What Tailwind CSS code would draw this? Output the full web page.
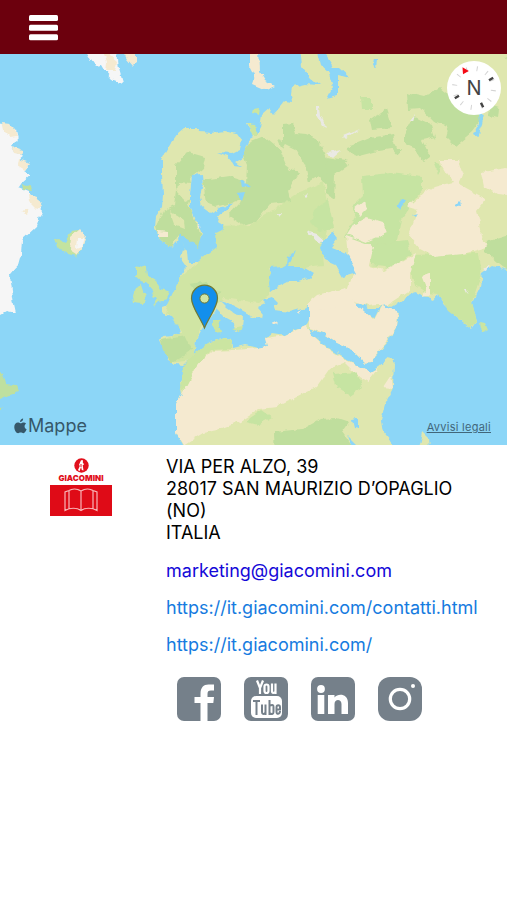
<!DOCTYPE html>
<html lang="it">
<head>
<meta charset="utf-8">
<meta name="viewport" content="width=device-width, initial-scale=1">
<title>Giacomini - Contatti</title>
<script src="https://cdn.jsdelivr.net/npm/@tailwindcss/browser@4"></script>
</head>
<body class="bg-white text-black font-[Inter,'Liberation_Sans',sans-serif]">
<header class="flex h-[54px] items-center bg-[#6c000d] px-7">
  <button type="button" aria-label="Menu" class="block pt-px">
    <svg class="h-7 w-8" viewBox="0 0 32 28" fill="#fff"><rect x="1" y="1" width="29" height="6" rx="1.5"/><rect x="1" y="10.700" width="29" height="6" rx="1.5"/><rect x="1" y="20.300" width="29" height="6" rx="1.500"/></svg>
  </button>
</header>
<main>
  <section aria-label="Mappa" class="relative">
    <svg class="block aspect-[507/391] w-full" viewBox="0 54 507 391" preserveAspectRatio="xMidYMid slice">
      <defs>
        <filter id="coast" x="0" y="0" width="1" height="1" filterUnits="objectBoundingBox">
          <feTurbulence type="fractalNoise" baseFrequency="0.13" numOctaves="2" seed="4"/>
          <feDisplacementMap in="SourceGraphic" scale="6" xChannelSelector="R" yChannelSelector="G"/>
        </filter>
      </defs>
      <rect y="54" width="507" height="391" fill="#8cd6f7"/>
      <g filter="url(#coast)">
        <rect x="-20" y="34" width="547" height="431" fill="#8cd6f7"/>
        <!-- Greenland -->
        <path fill="#f6f6f6" d="M-20 122L3 125 16 130 18 140 10 145 14 152 24 156 18 161 29 165 24 171 30 175 22 182 18 188 28 192 36 200 42 210 36 227 22 240 21 255 18 266 10 275 12 290 14 304 16 313 7 311 0 315-20 315Z"/>
        <path fill="#f5ead0" d="M2 123L10 124 15 129 17 137 10 138 4 132ZM11 146L22 150 23 155 14 153ZM18 159L30 163 25 170 17 165ZM28 194L36 197 42 207 37 209 29 201ZM22 212L30 209 27 215Z"/>
        <path fill="#bfe09f" d="M22 184L29 185 32 191 23 190Z"/>
        <!-- Svalbard -->
        <path fill="#f6f6f6" d="M86 50L117 50 119 69 123 83 112 79 104 70 101 65 96 66 91 59Z"/>
        <path fill="#f5ead0" d="M103 50L117 62 115 71 106 71 107 62ZM122 50L137 50 137 63 133 66 127 59Z"/>
        <!-- Newfoundland -->
        <path fill="#bfe09f" d="M-20 370L2 374 5 384 16 385 19 392 10 395 0 399-20 404ZM-10 407L4 408-2 413Z"/>
        <!-- Iceland -->
        <path fill="#c3e3a0" d="M55 240L59 239 65 242 71 231 78 230 85 236 82 248 76 256 68 254 59 249Z"/>
        <path fill="#f5ead0" d="M71 237L80 229 86 236 82 248 76 255 70 251Z"/>
        <path fill="#f6f6f6" d="M77 238L84 238 81 247 76 249Z"/>
        <!-- Novaya Zemlya -->
        <path fill="#f5ead0" d="M250 48L259 48 260 72 265 80 275 86 266 90 252 84 255 75 250 65Z"/>
        <!-- Eurasia and Africa -->
        <path fill="#dfe7af" d="M527 30L298 30 302 66 311 78 320 85 305 84 292 87 291 95 292 102 285 101 280 107 274 114 270 108 262 115 260 128 257 134 250 123 246 123 253 137 248 140 245 150 243 158 236 162 243 167 234 166 228 156 217 152 232 153 240 149 242 141 237 134 225 131 212 133 200 132 197 128 184 128 178 133 171 143 166 152 162 160 162 175 163 195 162 207 156 215 155 228 160 240 172 248 179 240 186 249 182 251 180 258 185 265 184 272 180 278 178 288 174 297 170 304 162 307 162 313 171 316 178 323 180 333 172 335 162 336 160 340 164 349 168 360 175 364 184 365 192 358 195 350 196 340 202 329 212 316 216 309 223 316 234 322 235 331 242 328 243 318 236 314 226 307 219 300 226 302 236 307 247 313 256 318 263 319 264 314 258 307 266 303 272 303 274 310 289 312 303 308 309 306 310 318 306 326 295 330 285 335 272 333 266 338 268 346 258 348 245 345 233 348 232 339 225 338 210 342 200 350 192 362 184 368 180 382 182 393 176 405 176 432 186 450 186 470 394 470 394 446 383 432 381 420 385 404 393 388 394 362 390 357 378 367 370 372 360 367 343 357 327 347 314 336 307 328 322 333 335 342 352 350 367 365 387 343 397 325 399 312 387 309 382 303 378 311 374 319 366 313 354 304 359 302 368 308 378 308 383 302 391 307 403 300 415 292 427 297 434 300 438 295 444 305 458 318 472 329 477 322 472 303 480 287 482 272 492 265 527 276Z"/>
        <!-- Central Europe and western Russia -->
        <path fill="#d0e5a4" d="M213 250L218 226 250 225 300 192 323 182 330 220 322 248 324 265 311 266 300 270 270 268 270 295 258 303 224 298 205 315 196 340 193 360 176 362 162 340 182 332 165 309 180 278 203 258Z"/>
        <!-- Forests -->
        <g fill="#bfde9d">
          <path d="M248 142L263 136 280 150 286 165 298 174 288 190 290 202 270 204 255 222 242 225 228 216 240 203 246 185 247 165 243 155Z"/>
          <path d="M203 180L230 176 243 180 248 197 232 202 216 207 206 203Z"/>
          <path d="M176 165L188 152 205 157 203 168 190 178 193 190 188 204 199 230 202 246 196 249 178 235 172 248 160 240 156 226 163 211 174 205 176 190Z"/>
          <path d="M283 124L293 123 296 134 306 135 320 141 327 158 331 190 317 177 309 182 305 165 295 149 283 143ZM278 139L286 142 282 149Z"/>
          <path d="M407 93L424 97 440 88 450 96 476 95 480 121 472 132 455 146 446 137 449 126 433 121 421 108 408 109ZM370 120L386 109 392 128 372 130ZM404 135L414 116 431 124 435 137 422 140 430 156 423 161 414 147 404 143ZM348 147L370 138 393 134 397 148 378 151 355 157ZM391 148L402 148 398 156Z"/>
          <path d="M327 157L345 160 349 165 335 175 334 199 326 194ZM487 242L527 230 527 277 504 268 485 252ZM490 105L499 108 498 118 489 116ZM505 58L527 49 527 67Z"/>
          <path d="M161 340L186 336 192 349 183 356 171 363 163 350ZM274 432L302 429 320 419 337 418 349 422 342 432 355 450 275 460ZM189 284L207 281 210 291 193 293ZM200 293L223 290 206 302Z"/>
        </g>
        <!-- Steppe -->
        <g fill="#c6e4a2">
          <path d="M362 176L391 173 422 177 422 190 410 206 401 219 396 246 370 250 345 237 356 217 352 207 363 196Z"/>
          <path d="M314 210L328 200 334 228 319 231 311 222ZM372 245L407 240 411 254 392 268 371 265ZM361 97L371 97 371 109 362 109ZM434 163L442 166 438 173Z"/>
          <path d="M250 418L262 410 272 417 258 425 247 422ZM333 373L355 371 363 387 350 396 337 388Z"/>
        </g>
        <!-- India -->
        <path fill="#cbe5a1" d="M412 255L446 254 478 253 481 275 472 302 477 322 471 328 448 310 438 295 428 294 415 285 409 270Z"/>
        <path fill="#cbe5a1" d="M480 322L485 323 488 330 484 332 481 328Z"/>
        <!-- Deserts -->
        <g fill="#f5ead0">
          <path d="M211 351L235 350 258 348 268 346 266 338 285 335 306 326 310 333 327 348 346 360 370 372 378 368 368 382 359 377 345 363 330 369 318 386 291 400 277 407 259 409 240 421 217 430 203 433 184 445 176 432 176 405 182 393 190 380 200 362Z"/>
          <path d="M313 299L330 293 353 301 366 313 374 320 382 305 398 312 397 325 386 343 367 365 352 350 335 342 321 332 309 328 309 305Z"/>
          <path d="M346 236L374 246 369 266 384 270 399 263 416 253 410 274 410 291 390 304 368 306 354 301 345 294 350 280 356 272 348 257Z"/>
          <path d="M308 304L318 295 345 288 354 301 340 306 312 312Z"/>
          <path d="M439 160L458 160 463 175 459 184 486 199 477 211 480 223 483 242 487 247 463 254 435 257 420 249 409 235 418 210 408 207 421 196 434 187 453 182 447 174ZM481 172L507 168 527 178 527 197 497 194 484 187ZM354 209L365 200 367 210 360 217ZM347 235L354 224 367 217 383 222 387 233 366 242ZM422 275L430 272 430 295 423 297 426 285ZM391 375L393 388 383 387Z"/>
          <path d="M158 230L168 231 168 237 158 237Z"/>
        </g>
        <path fill="#dfe7af" d="M178 182L192 183 193 198 185 201 177 192ZM169 210L184 221 185 228 174 224Z"/>
        <!-- British Isles, Mediterranean islands -->
        <path fill="#cbe5a1" d="M136 264L146 267 147 275 156 281 160 288 169 290 167 299 159 301 154 306 157 299 151 296 154 290 149 284 142 281 136 276ZM135 288L142 285 146 297 142 304 134 303 133 295ZM213 320L218 320 221 331 216 332 213 326ZM232 328L243 326 241 332ZM254 109L260 108 259 115 253 113ZM247 123L255 124 257 136 252 136Z"/>
        <path fill="#cbe5a1" d="M182 370L190 358 208 343 225 338 233 340 232 349 210 350 195 370 185 390 180 388Z"/>
        <path fill="#f5ead0" d="M270 324L277 321 279 323 272 326ZM298 311L303 309 300 314Z"/>
        <path fill="#dfe7af" d="M423 432L429 438 430 450 419 450Z"/>
        <!-- Inland seas and lakes -->
        <g fill="#8cd6f7">
          <path d="M192 175L202 174 203 185 200 196 202 207 210 213 222 207 233 202 228 209 219 214 217 221 224 226 222 231 216 234 217 247 208 254 198 262 189 262 188 251 178 240 180 233 192 243 198 247 202 234 197 222 190 208 190 194Z"/>
          <path d="M271 268L282 267 287 264 288 257 295 251 291 261 287 267 303 267 313 273 308 278 298 281 289 281 277 287 270 292 269 283Z"/>
          <path d="M323 241L332 233 337 239 331 247 346 253 352 264 357 273 343 277 336 265 325 260 320 249ZM262 300L272 297 278 303 269 307Z"/>
          <path d="M236 193L245 192 242 201ZM240 179L249 186 242 187ZM316 48L322 48 333 65 329 72 320 64ZM327 68L339 68 350 78 338 75 338 96 327 99 333 87ZM396 207L401 199 406 200 400 210ZM455 205L460 200 461 206ZM412 216L418 214 415 218ZM352 420L359 419 359 429 354 428ZM348 436L361 449 353 450ZM478 114L484 115 482 124 477 136 474 134 479 124ZM374 59L377 59 376 67 373 65Z"/>
        </g>
        <g fill="#eae9e4">
          <path d="M317 106L320 106 321 116 326 127 322 125 317 116ZM343 136L360 129 346 139ZM307 231L317 234 324 240 320 245ZM327 153L341 150 333 157ZM276 213L281 213 279 217ZM198 224L201 225 198 227ZM304 195L309 193 306 197ZM409 121L415 114 413 121ZM465 290L469 290 467 294ZM483 269L490 264 487 270Z"/>
        </g>
      </g>
      <path fill="#138fec" stroke="#6f7936" stroke-width="1.200" d="M204.500 328C200 317 191.500 307 191.500 298.200A13 13 0 0 1 217.500 298.200C217.500 307 209 317 204.500 328Z"/>
      <circle cx="204.500" cy="298.500" r="4.600" fill="#d0e5a4" stroke="#6f7936"/>
    </svg>
    <button type="button" aria-label="Bussola" class="absolute right-[6px] top-[7px] size-[54px] rounded-full bg-white">
      <svg class="absolute inset-0 size-full" viewBox="-27 -27 54 54" fill="none">
        <circle r="19.500" stroke="#d4d4d4" stroke-width="5" stroke-dasharray="1 9.210" transform="rotate(-24)"/>
        <path stroke="#444" stroke-width="2.400" d="M15-7.800L19.200-10.300M-15 7.800L-19.200 10.300M7 14.800L9.200 19.200"/>
        <path fill="#f50a14" d="M-11.500-20.800L-5.200-17-11-13.800Z"/>
      </svg>
      <span class="relative text-xl text-[#444]">N</span>
    </button>
    <div class="absolute bottom-2 left-[14px] flex items-center gap-px text-[#36586a]">
      <svg class="h-4 w-[13px]" viewBox="0 0 14 17" fill="currentColor" aria-hidden="true"><path d="M9.800.3C9.900 1.500 9.400 2.500 8.700 3.200 8 3.900 7.200 4.200 6.600 4.100 6.500 3 7 2 7.600 1.400 8.300.7 9.200.3 9.800.3ZM13 6.100C10.600 7.600 11 10.900 13.600 12 13 13.800 11.600 16.200 10.100 16.200 9 16.200 8.500 15.600 7.200 15.600 5.900 15.600 5.400 16.200 4.400 16.200 2.300 16.200.3 12.600.3 9.500.3 6.400 2.200 4.700 4.100 4.700 5.300 4.700 6.400 5.500 7.100 5.500 7.900 5.500 9.100 4.600 10.600 4.700 11.600 4.800 12.400 5.200 13 6.100Z"/></svg>
      <span class="text-lg leading-[22px]">Mappe</span>
    </div>
    <a href="#" class="absolute bottom-[10px] right-4 text-[11px] leading-4 tracking-wide text-[#41667a] underline">Avvisi legali</a>
  </section>

  <section class="grid grid-cols-[1fr_2fr] pt-[11px]">
    <div class="flex justify-center pl-px pr-2">
      <figure class="flex w-[62px] flex-col items-center pt-[2px]">
        <svg class="size-[15px]" viewBox="0 0 15 15" aria-hidden="true"><circle cx="7.500" cy="7.500" r="7.200" fill="#e1101c"/><path fill="#fff" d="M7 2.200H9L8.800 4.500 10.200 6.500 8.700 7 9.500 12.500 7.800 12 7.100 9 5.500 13.200 4 12 5.800 8 5 6.800Z"/><path stroke="#e1101c" d="M7 6V9"/></svg>
        <figcaption class="text-[8px] font-black leading-[11px] text-[#e1101c]">GIACOMINI</figcaption>
        <svg class="mt-px h-[31px] w-[62px] bg-[#df0b17]" viewBox="0 0 62 31" fill="none" stroke="#f9b5b8" stroke-width="1.200" aria-hidden="true"><path d="M31 6C27 3.500 22 3.500 19 5.500L15 7V25.500C20 22.500 27 22.500 31 25.500 35 22.500 42 22.500 47 25.500V7L43 5.500C40 3.500 35 3.500 31 6V25.500M19 5.500V23.500M43 5.500V23.500"/></svg>
      </figure>
    </div>
    <div class="-ml-[3px] pr-4 text-lg leading-[22px]">
      <address class="not-italic">VIA PER ALZO, 39<br>28017 SAN MAURIZIO D’OPAGLIO (NO)<br>ITALIA</address>
      <div class="mt-4 flex flex-col items-start gap-[15px]">
        <a href="mailto:marketing@giacomini.com" class="text-[#1408d8]">marketing@giacomini.com</a>
        <a href="https://it.giacomini.com/contatti.html" class="text-[#167be0]">https://it.giacomini.com/contatti.html</a>
        <a href="https://it.giacomini.com/" class="text-[#167be0]">https://it.giacomini.com/</a>
      </div>
      <nav aria-label="Social" class="ml-[11px] mt-[21px] flex gap-[23px]">
        <a href="#" aria-label="Facebook"><svg class="size-11" viewBox="0 0 44 44"><rect width="44" height="44" rx="7" fill="#75808a"/><path fill="#fff" d="M23.500 44V26H17.500V20H23.500V17C23.500 10.500 26.500 7.500 31.500 7.500H37V13.500H34C31.300 13.500 30.500 14.500 30.500 17V20H37L36.300 26H30.500V44Z"/></svg></a>
        <a href="#" aria-label="YouTube"><svg class="size-11" viewBox="0 0 44 44"><rect width="44" height="44" rx="7" fill="#75808a"/><rect x="7" y="19" width="31" height="22" rx="5" fill="#fff"/><g fill="none" stroke="#fff" stroke-width="2.200"><path d="M13 3.500L16 11 19 3.500M16 10V17"/><rect x="20.500" y="7.500" width="4" height="8.500" rx="2"/><path d="M28 6.500V14C28 17 30.500 16 31.500 14.500M31.500 6.500V17"/></g><g fill="none" stroke="#75808a" stroke-width="2"><path d="M9 24H16M12.500 24V38M18 27.500V35C18 37.500 20 37.500 21.500 35.500M21.500 27.500V38M25.500 23V38M25.500 29C29 27 29.500 28.500 29.500 30V35C29.500 37.500 27.500 37.500 25.500 36M32.500 32.500H36V30.500C36 27.500 32.500 27.500 32.500 30.500V35C32.500 37.500 36 37.500 36 34"/></g></svg></a>
        <a href="#" aria-label="LinkedIn"><svg class="size-11" viewBox="0 0 44 44"><rect width="44" height="44" rx="7" fill="#75808a"/><g fill="#fff"><circle cx="10" cy="12" r="3.900"/><path d="M6.700 18H13.300V37H6.700ZM17 18H23.500V20.500C27 16 37 16.500 37 26V37H30.500V27C30.500 21.500 23.500 21.500 23.500 27V37H17Z"/></g></svg></a>
        <a href="#" aria-label="Instagram"><svg class="size-11" viewBox="0 0 44 44"><rect width="44" height="44" rx="12" fill="#75808a"/><circle cx="22" cy="22" r="9.700" fill="none" stroke="#fff" stroke-width="3.200"/><circle cx="35" cy="9" r="2" fill="#fff"/></svg></a>
      </nav>
    </div>
  </section>
</main>
</body>
</html>
